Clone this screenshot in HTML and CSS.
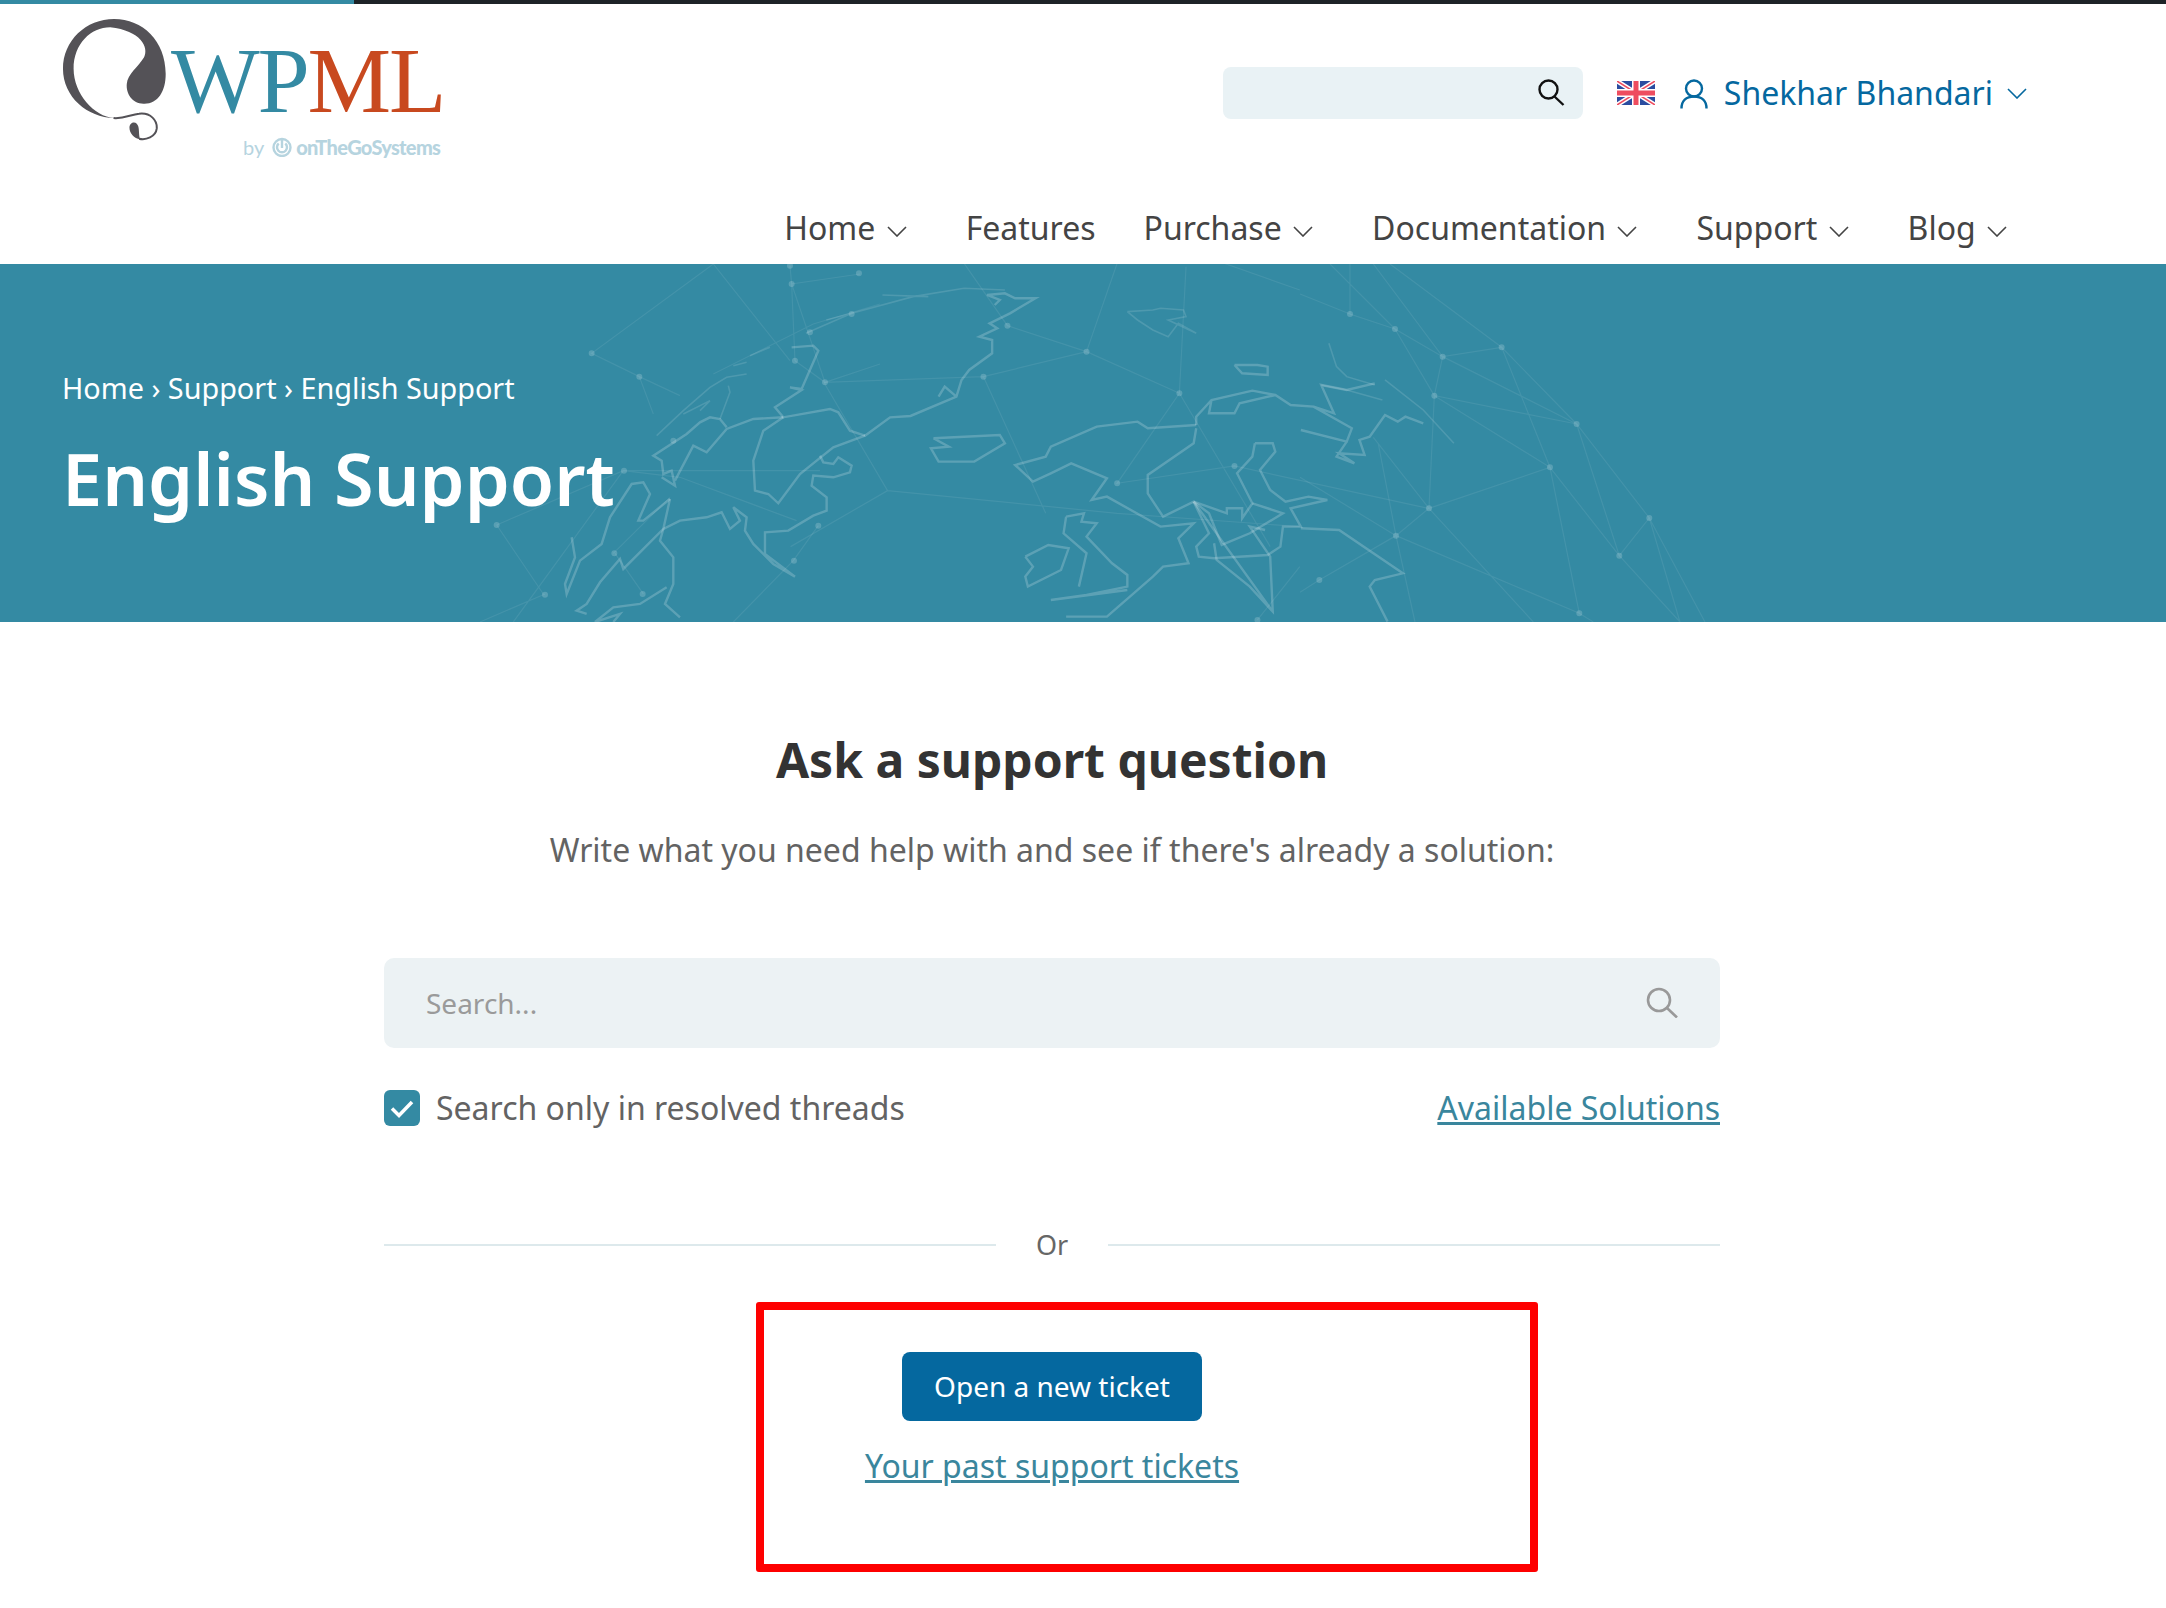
FILE: index.html
```html
<!DOCTYPE html>
<html lang="en">
<head>
    <meta charset="UTF-8">
    <meta name="viewport" content="width=device-width, initial-scale=1.0">
    <title>English Support</title>
    <link rel="stylesheet" href="styles.css">
</head>
<body>
    <div class="topbar"><div class="topbar-progress"></div></div>

    <header class="header">
        <a class="logo" href="#">
            <svg class="logo-mark" viewBox="34 22 314 370">
                <path class="logo-fill" d="M190 323C110 322 36 260 36 175C36 90 105 25 190 25C275 25 345 90 345 190C345 245 320 282 278 280C245 280 225 250 228 220C230 190 262 170 280 140C295 110 270 60 178 50C120 50 68 100 68 175C68 250 130 320 190 323Z"/>
                <path class="logo-tail" d="M188 323C220 326 240 312 265 310C300 306 320 330 318 355C315 380 285 390 265 385"/>
                <path class="logo-fill" d="M268 387C250 384 236 368 236 352C236 338 250 332 258 340C268 350 262 370 268 387Z"/>
            </svg>
            <div class="logo-text">
                <div class="logo-word"><span class="logo-wp">WP</span><span class="logo-ml">ML</span></div>
                <div class="logo-by">
                    <span class="logo-by-word">by</span>
                    <svg class="logo-power" viewBox="0 0 20 20">
                        <circle cx="10" cy="10.5" r="8.500" />
                        <path d="M6.700 6.500a5 5 0 1 0 6.600 0M10 3v8"/>
                    </svg>
                    <span class="logo-by-name">onTheGoSystems</span>
                </div>
            </div>
        </a>

        <div class="header-right">
            <div class="account-row">
                <div class="site-search">
                    <input class="site-search-input" type="text">
                    <svg class="site-search-icon" viewBox="0 0 29 27">
                        <circle cx="11.5" cy="10.5" r="9"/>
                        <path d="M17.5 17.5l9 8.5"/>
                    </svg>
                </div>
                <svg class="flag" viewBox="0 0 38 24">
                    <rect width="38" height="24" fill="#2b4c9f"/>
                    <path d="M0 0l38 24M38 0L0 24" stroke="#fff" stroke-width="4.5"/>
                    <path d="M0 0l38 24M38 0L0 24" stroke="#ee4d5f" stroke-width="1.5"/>
                    <path d="M19 0v24M0 12h38" stroke="#fff" stroke-width="8"/>
                    <path d="M19 0v24M0 12h38" stroke="#ee4d5f" stroke-width="5"/>
                </svg>
                <svg class="user-icon" viewBox="0 0 28 30">
                    <circle cx="14" cy="9.5" r="8"/>
                    <path d="M1.500 29.500C1.500 22 6 17.500 14 17.500S26.500 22 26.500 29.500"/>
                </svg>
                <a class="user-name" href="#">Shekhar Bhandari</a>
                <svg class="chevron chevron-user" viewBox="0 0 20 11"><path d="M1 1l9 9 9-9"/></svg>
            </div>
            <nav class="nav">
                <a class="nav-item has-menu" href="#">Home <svg class="chevron" viewBox="0 0 20 11"><path d="M1 1l9 9 9-9"/></svg></a>
                <a class="nav-item" href="#">Features</a>
                <a class="nav-item has-menu" href="#">Purchase <svg class="chevron" viewBox="0 0 20 11"><path d="M1 1l9 9 9-9"/></svg></a>
                <a class="nav-item has-menu" href="#">Documentation <svg class="chevron" viewBox="0 0 20 11"><path d="M1 1l9 9 9-9"/></svg></a>
                <a class="nav-item has-menu" href="#">Support <svg class="chevron" viewBox="0 0 20 11"><path d="M1 1l9 9 9-9"/></svg></a>
                <a class="nav-item" href="#">Blog <svg class="chevron" viewBox="0 0 20 11"><path d="M1 1l9 9 9-9"/></svg></a>
            </nav>
        </div>
    </header>

    <section class="hero">
        <!-- background world map -->
        <svg class="hero-map" viewBox="0 0 2166 358">
            <g transform="translate(480 0) scale(.3333)">
                <path class="map-net" d="M600 395 478 338 335 268 700 0 930 290M478 338 520 450M930 5 935 60 945 290 1035 355 935 60 1140 30M1035 355 1200 300M50 783 190 990M50 783 430 620 600 640 950 770M1015 785 940 890 760 1074M195 990 0 1074M405 868 490 990M400 868 570 700M430 620 1020 620M100 1074 430 620M1200 120 1000 180 700 330"/>
                <path class="map-dots" d="M335 268h.01M478 338h.01M432 620h.01M50 783h.01M195 992h.01M403 868h.01M488 990h.01M580 530h.01M935 60h.01M930 5h.01M1137 28h.01M945 290h.01M1035 355h.01M1015 785h.01M942 890h.01M1115 150h.01M990 205h.01"/>
                <path class="map-land" d="M935 250 1000 245 1015 260 965 375 930 370 965 378 885 430 910 460 1050 435 1075 445 1110 500 1155 515"/>
                <path class="map-land" d="M910 460 850 500 820 590 825 680 865 690 895 718 960 630 1010 590 1060 550 1155 515"/>
                <path class="map-land" d="M1020 575 1030 595 1060 600 1075 580 1115 605 1110 625 1060 640 1000 635 995 665 1040 700 1040 740 1000 755 925 800 855 805 855 870 945 938 880 900 820 840 795 800 800 760 760 730 780 770 750 795 725 745 680 760 600 770 550 795 430 915 420 885 360 955 320 1020 290 1040 320 1050"/>
                <path class="map-land" d="M740 490 720 465 690 460 660 475 620 510 520 575 545 590 550 630 575 620 585 665 545 640M585 650 640 545 680 565 740 495 820 465 910 460"/>
                <path class="map-thin" d="M800 330 740 340 690 370 610 440 530 515M745 365 750 385 720 465M610 450 690 410 660 440M760 305 800 295M810 275 870 250"/>
                <path class="map-land" d="M570 705 490 770 475 770 510 690 490 655 455 660 390 760 365 840 300 890 260 990 255 960 285 880 275 820"/>
                <path class="map-land" d="M570 705 550 795 540 830 580 880 580 960 555 1020 600 1060"/>
                <path class="map-land" d="M560 970 480 1020 400 1030 345 1074 420 1050 400 1074"/>
            </g>
            <g transform="translate(760 -84) scale(.5102 .3333)">
                <path class="map-net" d="M485 437 640 515 822 640 700 910 930 858 1310 985M640 515 700 250M438 590 640 515M125 607 438 590M1058 1160 975 1320M250 932 60 1100M250 932 125 607M910 250 1058 330M400 250 485 437M250 932 700 1000 1058 1040M822 640 1000 1100M438 590 560 1000M835 260 822 640"/>
                <path class="map-dots" d="M485 437h.01M640 515h.01M822 640h.01M438 590h.01M700 910h.01M930 858h.01M975 1320h.01"/>
                <path class="map-land" d="M205 768 255 712 295 708 385 650 395 600 410 570 455 520 455 480 430 470 465 445 450 430 490 400 540 355 500 355 480 340 445 345 470 360 460 375M350 650 362 620 385 650"/>
                <path class="map-thin" d="M480 330 400 325 300 350 180 400 130 420M90 460 180 400M240 345 330 350"/>
                <path class="map-land" d="M855 735 760 745 740 725 660 740 570 800 560 830 500 855 535 905 570 880 610 850 680 895 650 960 680 950 785 1040 850 1030 820 1075 840 1150 790 1160 770 1190 680 1310 600 1310"/>
                <path class="map-land" d="M855 735 855 710 885 660 965 632 1010 645 1040 675 1085 680 1160 745 1150 785 1060 750M1150 785 1130 830 1165 850 1135 820 1185 825 1175 780 1195 770 1225 705 1250 725 1265 710 1300 730M885 660 880 700 930 700 940 670 1010 645M1085 680 1125 700 1100 615 1150 630 1205 610"/>
                <path class="map-land" d="M855 745 850 790 760 885 760 940 790 1010 850 965 880 1000 905 1095 960 1060 1025 1000 965 970"/>
                <path class="map-land" d="M970 790 1005 790 1010 815 980 870 1000 930 1030 965 1075 950 1112 960 1040 985 1060 1040 1025 1040 1020 1100 995 1125 890 1135 860 1130 855 1100 880 1060 850 965M970 790 965 830 935 880 965 970 945 1015 945 985 915 985 915 1000 850 965"/>
                <path class="map-land" d="M1060 1045 1135 1050 1260 1180 1205 1200 1195 1220 1230 1325M890 1090 895 1140 960 1220 1005 1295 1000 1130 960 1040 990 1050M850 965 1005 1295"/>
                <path class="map-land" d="M340 775 470 765 480 790 420 845 350 845 335 805 370 800 340 775"/>
                <path class="map-thin" d="M720 395 770 390 785 385 830 390 835 410 800 420 855 460 820 430 800 470 770 450 740 420 720 395"/>
                <path class="map-land" d="M930 555 975 555 995 560 995 585 945 580 930 555"/>
                <path class="map-land" d="M600 1010 635 1000 630 1025 660 1030 640 1070 690 1150 720 1185 720 1220 640 1245 570 1260 720 1230M600 1010 595 1060 640 1120 625 1220"/>
                <path class="map-land" d="M520 1130 565 1095 605 1105 590 1170 525 1220 520 1190 535 1160 520 1130"/>
                <path class="map-thin" d="M1115 490 1130 560 1150 590 1205 615M1100 615 1150 630 1220 660M1225 600 1300 690 1360 790"/>
            </g>
            <g transform="translate(1300 0) scale(.3333)">
                <path class="map-net" d="M270 0 605 250 830 480 1048 762 1215 1074M220 0 428 278 605 250M428 278 830 480M428 278 403 395 830 480M285 195 403 395M90 0 285 195 428 278M605 250 750 610M150 150 0 90M150 0 150 150 285 195M403 395 750 610 387 733 288 815 58 948 0 985M750 610 838 1048M750 610 958 875 1140 1074M830 480 958 875 1048 762 1140 1074M0 640 288 815 838 1048 880 1074M387 733 700 1074M403 395 387 733M220 520 387 733M235 540 288 815 345 1074"/>
                <path class="map-dots" d="M150 150h.01M285 195h.01M428 278h.01M605 250h.01M403 395h.01M830 480h.01M750 610h.01M387 733h.01M288 815h.01M1048 762h.01M958 875h.01M838 1048h.01M58 948h.01"/>
            </g>
        </svg>
        <div class="hero-content">
            <div class="breadcrumb">Home › Support › English Support</div>
            <h1 class="hero-title">English Support</h1>
        </div>
    </section>

    <main class="main">
        <h2 class="ask-title">Ask a support question</h2>
        <p class="ask-sub">Write what you need help with and see if there's already a solution:</p>

        <div class="ask-form">
            <div class="ask-search">
                <input class="ask-input" type="text" placeholder="Search...">
                <svg class="ask-search-icon" viewBox="0 0 32 31">
                    <circle cx="13" cy="13" r="11"/>
                    <path d="M21 21l10 9.500"/>
                </svg>
            </div>
            <div class="ask-options">
                <label class="check">
                    <span class="check-box">
                        <svg viewBox="0 0 36 36"><path d="M8 18.500l7 7 13-13.500"/></svg>
                    </span>
                    Search only in resolved threads
                </label>
                <a class="link" href="#">Available Solutions</a>
            </div>
            <div class="divider"><span>Or</span></div>
            <div class="ticket-actions">
                <a class="btn" href="#">Open a new ticket</a>
                <a class="link" href="#">Your past support tickets</a>
            </div>
        </div>
    </main>

    <!-- red box drawn over the page -->
    <div class="highlight"></div>
</body>
</html>
```

FILE: styles.css
```css
body {
    font-family: "Noto Sans", "Open Sans", sans-serif;
    margin: 0;
    position: relative;
    background: #fff;
    color: #444;
    overflow: hidden;
    height: 1608px;
}
a {
    text-decoration: none;
    color: inherit;
}

.topbar {
    height: 4px;
    background: #1d2327;
}
.topbar-progress {
    width: 354px;
    height: 4px;
    background: #348aa3;
}

/* header */
.header {
    height: 260px;
    box-sizing: border-box;
    padding: 14px 0 0 62px;
    display: flex;
    justify-content: space-between;
}
.logo {
    display: flex;
    align-items: flex-start;
    gap: 4px;
    height: 160px;
}
.logo-mark {
    width: 105px;
    height: 123px;
}
.logo-fill {
    fill: #545257;
}
.logo-tail {
    fill: none;
    stroke: #545257;
    stroke-width: 6;
}
.logo-text {
    margin-top: 15px;
}
.logo-word {
    font-family: "Liberation Serif", serif;
    font-size: 94px;
    line-height: 94px;
    letter-spacing: -2.2px;
}
.logo-wp {
    color: #348aa3;
}
.logo-ml {
    color: #c8491f;
}
.logo-by {
    display: flex;
    justify-content: flex-end;
    align-items: center;
    gap: 8px;
    margin-top: 8px;
    margin-right: 4px;
    color: #b6d4df;
    font-family: Lato, sans-serif;
    font-size: 20px;
    line-height: 24px;
}
.logo-by-name {
    font-weight: 900;
    letter-spacing: -.7px;
    margin-left: -4px;
}
.logo-power {
    width: 20px;
    height: 20px;
    fill: none;
    stroke: #b6d4df;
    stroke-width: 2.4;
}

.header-right {
    display: flex;
    flex-direction: column;
    align-items: flex-end;
}
.account-row {
    display: flex;
    align-items: center;
    margin-top: 49px;
    margin-right: 139px;
    height: 52px;
    color: #05689f;
}
.site-search {
    width: 360px;
    height: 52px;
    position: relative;
    margin-right: 34px;
}
.site-search-input {
    width: 100%;
    height: 100%;
    box-sizing: border-box;
    border: none;
    border-radius: 8px;
    background: #e9f2f5;
}
.site-search-icon {
    position: absolute;
    right: 17px;
    top: 12px;
    width: 29px;
    height: 27px;
    fill: none;
    stroke: #111;
    stroke-width: 2.4;
}
.flag {
    width: 38px;
    height: 24px;
    margin-right: 25px;
}
.user-icon {
    width: 28px;
    height: 30px;
    margin-right: 16px;
    margin-top: 2px;
    fill: none;
    stroke: #05689f;
    stroke-width: 2.4;
}
.user-name {
    font-size: 32px;
    margin-top: -2px;
}
.chevron {
    width: 20px;
    height: 11px;
    fill: none;
    stroke: #444;
    stroke-width: 1.6;
    margin-left: 3px;
    vertical-align: 3px;
}
.chevron-user {
    stroke: #05689f;
    margin-left: 14px;
}

.nav {
    display: flex;
    gap: 48px;
    margin-top: 87px;
    margin-right: 159px;
    font-size: 32px;
    color: #444;
}
.nav-item.has-menu {
    padding-right: 11px;
}

/* hero */
.hero {
    height: 358px;
    background: #348aa3;
    position: relative;
    color: #fff;
}
.hero-map {
    position: absolute;
    left: 0;
    top: 0;
    width: 2166px;
    height: 358px;
    fill: none;
    filter: blur(.5px);
}
.map-land, .map-thin, .map-net, .map-dots {
    vector-effect: non-scaling-stroke;
    stroke: #fff;
}
.map-land {
    stroke-opacity: .2;
    stroke-width: 2.4;
}
.map-thin {
    stroke-opacity: .13;
    stroke-width: 1.6;
}
.map-net {
    stroke-opacity: .08;
    stroke-width: 1.2;
}
.map-dots {
    stroke-opacity: .18;
    stroke-width: 6;
    stroke-linecap: round;
}
.hero-content {
    position: relative;
    padding: 101px 0 0 62px;
}
.breadcrumb {
    font-size: 28.8px;
    line-height: 46px;
}
.hero-title {
    margin: 18px 0 0;
    font-size: 72px;
    line-height: 98px;
    font-weight: 600;
}

/* main */
.main {
    width: 2104px;
    text-align: center;
}
.ask-title {
    margin: 0;
    padding-top: 105px;
    font-size: 48px;
    line-height: 66px;
    font-weight: 700;
    color: #333;
}
.ask-sub {
    margin: 34px 0 0;
    font-size: 32px;
    line-height: 46px;
    color: #636363;
}
.ask-form {
    width: 1336px;
    margin: 85px auto 0;
}
.ask-search {
    position: relative;
    height: 90px;
}
.ask-input {
    width: 100%;
    height: 100%;
    box-sizing: border-box;
    border: none;
    border-radius: 10px;
    background: #ecf2f4;
    padding: 0 42px;
    font-family: inherit;
    font-size: 28px;
}
.ask-input::placeholder {
    color: #9a9a9a;
}
.ask-search-icon {
    position: absolute;
    right: 42px;
    top: 29px;
    width: 32px;
    height: 31px;
    fill: none;
    stroke: #999;
    stroke-width: 2.6;
}
.ask-options {
    display: flex;
    justify-content: space-between;
    align-items: center;
    margin-top: 37px;
    font-size: 32px;
    line-height: 46px;
    color: #636363;
}
.check {
    display: flex;
    align-items: center;
    gap: 16px;
}
.check-box {
    width: 36px;
    height: 36px;
    border-radius: 6px;
    background: #348aa3;
}
.check-box svg {
    display: block;
    fill: none;
    stroke: #fff;
    stroke-width: 3.5;
}
.link {
    color: #3a869d;
    text-decoration: underline;
    font-size: 32px;
}
.divider {
    display: flex;
    align-items: center;
    gap: 40px;
    margin-top: 96px;
    font-size: 27px;
    line-height: 36px;
    color: #666;
}
.divider::before, .divider::after {
    content: "";
    flex: 1;
    height: 2px;
    background: #dde9ec;
}
.ticket-actions {
    display: flex;
    flex-direction: column;
    align-items: center;
    margin-top: 89px;
}
.btn {
    display: block;
    height: 69px;
    padding: 0 32px;
    border-radius: 8px;
    background: #05689f;
    color: #fff;
    font-size: 28px;
    line-height: 69px;
}
.ticket-actions .link {
    margin-top: 23px;
}

/* annotation on top of the screenshot */
.highlight {
    position: absolute;
    left: 756px;
    top: 1302px;
    width: 782px;
    height: 270px;
    box-sizing: border-box;
    border: 8px solid #fe0000;
    border-radius: 3px;
}
```
